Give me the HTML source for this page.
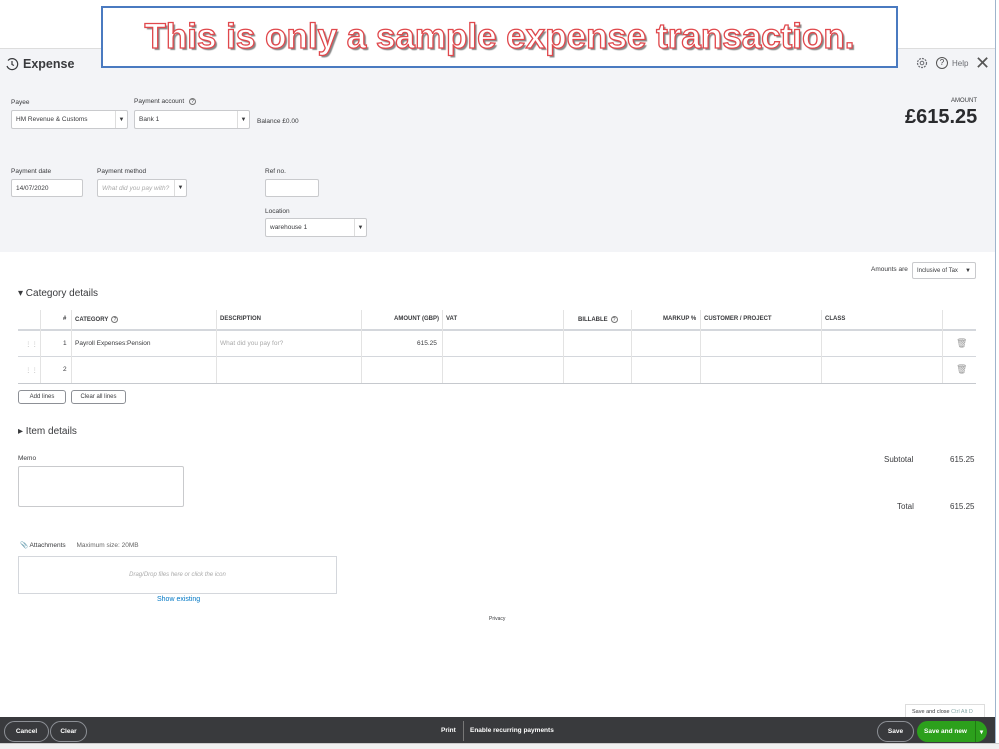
<!DOCTYPE html>
<html><head><meta charset="utf-8"><style>
*{margin:0;padding:0;box-sizing:border-box}
body{width:999px;height:749px;position:relative;overflow:hidden;background:#fff;font-family:"Liberation Sans",sans-serif;color:#393a3d}
.a{position:absolute}
.s{font-size:6.5px}
.inp{position:absolute;background:#fff;border:1px solid #c9cacd;border-radius:2px;font-size:6.5px;padding-left:4px;display:flex;align-items:center}
.dd{position:absolute;right:0;top:0;bottom:0;width:12px;border-left:1px solid #ddd;font-size:6px;display:flex;align-items:center;justify-content:center}
.th{position:absolute;top:316px;font-size:6px;font-weight:bold;color:#393a3d;white-space:nowrap}
.q{display:inline-block;width:7px;height:7px;border:1px solid #777;border-radius:50%;font-size:5px;text-align:center;line-height:6px;margin-left:3px;vertical-align:middle;font-weight:normal}
.vl{position:absolute;width:1px;background:#e3e3e3}
.btn{position:absolute;border:1px solid #8d9096;border-radius:3px;font-size:6px;display:flex;align-items:center;justify-content:center;background:#fff}
.fb{position:absolute;border:1px solid #8d9096;border-radius:12px;color:#fff;font-size:6.5px;font-weight:bold;display:flex;align-items:center;justify-content:center;height:21px;top:721px}
</style></head><body>
<div class="a" style="left:0;top:48px;width:995px;height:204px;background:#f3f4f7;border-top:1px solid #ddd"></div>
<div class="a" style="left:995px;top:0;width:1px;height:749px;background:#9fb4cc"></div>
<div class="a" style="left:101px;top:6px;width:797px;height:62px;background:#fff;border:2px solid #4a7ac0;display:flex;align-items:center;justify-content:center;font-size:35px;font-weight:bold;color:#fff;white-space:nowrap;-webkit-text-stroke:1.3px #e0484c;text-shadow:2px 2px 1px #888">This is only a sample expense transaction.</div>
<svg class="a" style="left:5px;top:57px" width="14" height="14" viewBox="0 0 14 14"><path d="M3 3.5A5.5 5.5 0 1 1 2 9" fill="none" stroke="#393a3d" stroke-width="1.2"/><path d="M7 4v3.5l2 1" fill="none" stroke="#393a3d" stroke-width="1.2"/></svg>
<div class="a" style="left:23px;top:57px;font-size:12.5px;font-weight:bold">Expense</div>
<svg class="a" style="left:916px;top:57px" width="12" height="12" viewBox="0 0 12 12"><circle cx="6" cy="6" r="4.5" fill="none" stroke="#6b6c72" stroke-width="1.2" stroke-dasharray="2 1"/><circle cx="6" cy="6" r="1.8" fill="none" stroke="#6b6c72"/></svg>
<div class="a" style="left:936px;top:57px;width:12px;height:12px;border:1px solid #555;border-radius:50%;font-size:8px;text-align:center;line-height:10px">?</div>
<div class="a" style="left:952px;top:59px;font-size:8px;color:#6b6c72">Help</div>
<div class="a" style="left:975px;top:53px;font-size:18px;color:#555">✕</div>
<div class="a s" style="left:11px;top:99px">Payee</div>
<div class="inp" style="left:11px;top:110px;width:117px;height:19px">HM Revenue &amp; Customs<div class="dd">▼</div></div>
<div class="a s" style="left:134px;top:98px">Payment account <span class="q">?</span></div>
<div class="inp" style="left:134px;top:110px;width:116px;height:19px">Bank 1<div class="dd">▼</div></div>
<div class="a s" style="left:257px;top:118px">Balance £0.00</div>
<div class="a" style="left:951px;top:98px;font-size:6px">AMOUNT</div>
<div class="a" style="left:905px;top:106px;font-size:20px;font-weight:bold;color:#2a2b2e">£615.25</div>
<div class="a s" style="left:11px;top:168px">Payment date</div>
<div class="inp" style="left:11px;top:179px;width:72px;height:18px">14/07/2020</div>
<div class="a s" style="left:97px;top:168px">Payment method</div>
<div class="inp" style="left:97px;top:179px;width:90px;height:18px;color:#aaa;font-style:italic">What did you pay with?<div class="dd" style="color:#393a3d;font-style:normal">▼</div></div>
<div class="a s" style="left:265px;top:168px">Ref no.</div>
<div class="inp" style="left:265px;top:179px;width:54px;height:18px"></div>
<div class="a s" style="left:265px;top:208px">Location</div>
<div class="inp" style="left:265px;top:218px;width:102px;height:19px">warehouse 1<div class="dd">▼</div></div>
<div class="a s" style="left:871px;top:266px">Amounts are</div>
<div class="inp" style="left:912px;top:262px;width:64px;height:17px;font-size:6px">Inclusive of Tax<span style="position:absolute;right:4px">▼</span></div>
<div class="a" style="left:18px;top:288px;font-size:10px">▾ Category details</div>
<div class="a" style="left:18px;top:329px;width:958px;height:2px;background:#d4d7dc"></div>
<div class="a" style="left:18px;top:356px;width:958px;height:1px;background:#d4d7dc"></div>
<div class="a" style="left:18px;top:383px;width:958px;height:1px;background:#c6c9ce"></div>
<div class="vl" style="left:40px;top:310px;height:73px"></div><div class="vl" style="left:71px;top:310px;height:73px"></div>
<div class="vl" style="left:216px;top:310px;height:73px"></div><div class="vl" style="left:361px;top:310px;height:73px"></div>
<div class="vl" style="left:442px;top:310px;height:73px"></div><div class="vl" style="left:563px;top:310px;height:73px"></div>
<div class="vl" style="left:631px;top:310px;height:73px"></div><div class="vl" style="left:700px;top:310px;height:73px"></div>
<div class="vl" style="left:821px;top:310px;height:73px"></div><div class="vl" style="left:942px;top:310px;height:73px"></div>
<div class="th" style="left:63px">#</div><div class="th" style="left:75px">CATEGORY<span class="q">?</span></div>
<div class="th" style="left:220px">DESCRIPTION</div><div class="th" style="left:394px">AMOUNT (GBP)</div>
<div class="th" style="left:446px">VAT</div><div class="th" style="left:578px">BILLABLE<span class="q">?</span></div>
<div class="th" style="left:663px">MARKUP %</div><div class="th" style="left:704px">CUSTOMER / PROJECT</div>
<div class="th" style="left:825px">CLASS</div>
<div class="a s" style="left:25px;top:340px;color:#bbb">⋮⋮</div><div class="a s" style="left:63px;top:340px">1</div>
<div class="a s" style="left:75px;top:340px">Payroll Expenses:Pension</div>
<div class="a s" style="left:220px;top:340px;color:#aaa">What did you pay for?</div>
<div class="a s" style="left:417px;top:340px">615.25</div>
<div class="a s" style="left:25px;top:366px;color:#bbb">⋮⋮</div><div class="a s" style="left:63px;top:366px">2</div>
<div class="a" style="left:956px;top:338px;font-size:9px;color:#999">🗑</div>
<div class="a" style="left:956px;top:364px;font-size:9px;color:#999">🗑</div>
<div class="btn" style="left:18px;top:390px;width:48px;height:14px">Add lines</div>
<div class="btn" style="left:71px;top:390px;width:55px;height:14px">Clear all lines</div>
<div class="a" style="left:18px;top:426px;font-size:10px">▸ Item details</div>
<div class="a s" style="left:18px;top:455px">Memo</div>
<div class="a" style="left:18px;top:466px;width:166px;height:41px;border:1px solid #c9cacd;border-radius:2px"></div>
<div class="a" style="left:884px;top:455px;font-size:8px">Subtotal</div><div class="a" style="left:950px;top:455px;font-size:8px">615.25</div>
<div class="a" style="left:897px;top:502px;font-size:8px">Total</div><div class="a" style="left:950px;top:502px;font-size:8px">615.25</div>
<div class="a s" style="left:20px;top:541px">📎 Attachments &nbsp;&nbsp;&nbsp;&nbsp; <span style="color:#666">Maximum size: 20MB</span></div>
<div class="a" style="left:18px;top:556px;width:319px;height:38px;border:1px solid #d4d7dc;font-size:6px;color:#aaa;font-style:italic;display:flex;align-items:center;justify-content:center">Drag/Drop files here or click the icon</div>
<div class="a" style="left:157px;top:596px;font-size:7px;color:#0077c5">Show existing</div>
<div class="a" style="left:489px;top:616px;font-size:5px">Privacy</div>
<div class="a" style="left:905px;top:704px;width:80px;height:15px;background:#fff;border:1px solid #ddd;font-size:5.5px;display:flex;align-items:center;padding-left:6px">Save and close&nbsp;<span style="color:#8aa">Ctrl Alt D</span></div>
<div class="a" style="left:0;top:717px;width:995px;height:26px;background:#393a3d"></div>
<div class="fb" style="left:4px;width:45px">Cancel</div>
<div class="fb" style="left:50px;width:37px">Clear</div>
<div class="a" style="left:441px;top:727px;font-size:6.5px;color:#fff;font-weight:bold">Print</div>
<div class="a" style="left:463px;top:721px;width:1px;height:20px;background:#777"></div>
<div class="a" style="left:470px;top:727px;font-size:6.5px;color:#fff;font-weight:bold">Enable recurring payments</div>
<div class="fb" style="left:877px;width:37px">Save</div>
<div class="a" style="left:917px;top:721px;width:70px;height:21px;border-radius:12px;background:#2ca01c;color:#fff;font-size:6.5px;font-weight:bold;display:flex;align-items:center;padding-left:7px">Save and new<span style="position:absolute;right:0;top:0;bottom:0;width:12px;border-left:1px solid #1f7a12;display:flex;align-items:center;justify-content:center">▾</span></div>
<div class="a" style="left:0;top:743px;width:999px;height:6px;background:#f0f0f0;border-top:1px solid #ccc"></div>
</body></html>
